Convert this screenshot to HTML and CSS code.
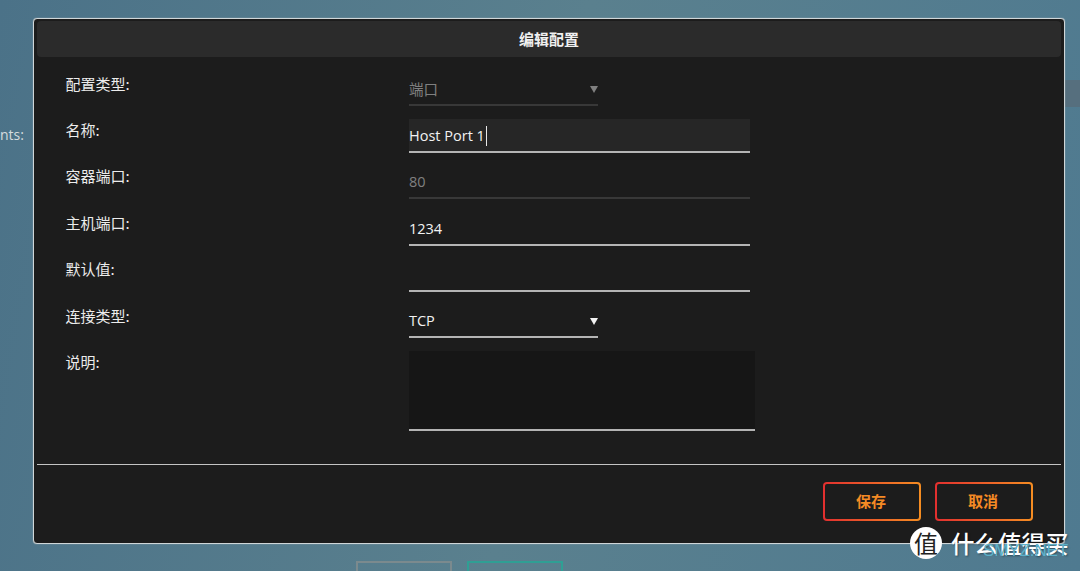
FILE: index.html
```html
<!DOCTYPE html>
<html lang="zh-CN">
<head>
<meta charset="UTF-8">
<title>编辑配置</title>
<link rel="stylesheet" href="styles.css">
</head>
<body>
<div class="behind-label">nts:</div>
<div class="behind-bar"></div>
<div class="behind-btn grey"></div>
<div class="behind-btn teal"></div>

<div class="dialog">
    <div class="dialog-title">编辑配置</div>
    <div class="form">
        <div class="row row-select">
            <div class="label">配置类型:</div>
            <div class="field select disabled">端口<span class="arrow"></span></div>
        </div>
        <div class="row">
            <div class="label">名称:</div>
            <div class="field focused">Host Port 1<span class="caret"></span></div>
        </div>
        <div class="row">
            <div class="label">容器端口:</div>
            <div class="field disabled">80</div>
        </div>
        <div class="row">
            <div class="label">主机端口:</div>
            <div class="field">1234</div>
        </div>
        <div class="row">
            <div class="label">默认值:</div>
            <div class="field"></div>
        </div>
        <div class="row">
            <div class="label">连接类型:</div>
            <div class="field select">TCP<span class="arrow"></span></div>
        </div>
        <div class="row">
            <div class="label">说明:</div>
            <div class="field textarea"></div>
        </div>
    </div>
    <div class="dialog-footer">
        <button class="btn">保存</button>
        <button class="btn">取消</button>
    </div>
</div>

<div class="watermark">
    <span class="wm-logo">值</span>
    <span class="wm-text">什么值得买</span>
    <span class="wm-site">SMYZ.NET</span>
</div>
</body>
</html>
```

FILE: styles.css
```css
html, body {
    margin: 0;
    padding: 0;
    height: 100%;
}
body {
    position: relative;
    width: 1080px;
    height: 571px;
    overflow: hidden;
    font-family: "Noto Sans CJK SC", sans-serif;
    background: linear-gradient(100deg, #4b7288 0%, #5a808e 50%, #4f7a90 100%);
}
.behind-label {
    position: absolute;
    left: 0;
    top: 125px;
    color: #d5dcdf;
    font-family: "Open Sans", sans-serif;
    font-size: 14px;
    line-height: 20px;
}
.behind-bar {
    position: absolute;
    left: 1065px;
    top: 80px;
    width: 15px;
    height: 27px;
    background-color: #566f7e;
}
.behind-btn {
    position: absolute;
    top: 561px;
    width: 92px;
    height: 30px;
    border: 2px solid #7b8a8e;
}
.behind-btn.grey {
    left: 356px;
}
.behind-btn.teal {
    left: 467px;
    border-color: #2f9f94;
}

.dialog {
    position: absolute;
    left: 33px;
    top: 18px;
    width: 1032px;
    height: 526px;
    box-sizing: border-box;
    border: 1px solid #cfd6d8;
    border-radius: 4px;
    box-shadow: 0 0 1px #cfd6d8;
    background-color: #1c1c1c;
    padding: 2px 3px;
    display: flex;
    flex-direction: column;
}
.dialog-title {
    height: 36px;
    flex-shrink: 0;
    background-color: #2b2b2b;
    border-radius: 4px;
    color: #f0f0f0;
    font-size: 15px;
    font-weight: 700;
    line-height: 36px;
    text-align: center;
}
.form {
    display: flex;
    flex-direction: column;
    gap: 13.5px;
    padding: 16px 0 0 28.5px;
    height: 408px;
    flex-shrink: 0;
    box-sizing: border-box;
    border-bottom: 1px solid #c4c4c4;
}
.row {
    display: grid;
    grid-template-columns: 343.5px 1fr;
    height: 33px;
}
.row-select {
    height: 32px;
}
.label {
    color: #ececec;
    font-size: 15px;
    line-height: 22px;
}
.field {
    position: relative;
    width: 341px;
    height: 34px;
    padding-top: 2px;
    box-sizing: border-box;
    border-bottom: 2px solid #b4b4b4;
    color: #f2f2f2;
    font-family: "Open Sans", "Noto Sans CJK SC", sans-serif;
    font-size: 14.5px;
    line-height: 30px;
    display: flex;
    align-items: center;
}
.field.focused {
    background-color: #262626;
}
.field.disabled {
    color: #808080;
    border-bottom-color: #383838;
}
.field.select {
    width: 189px;
    height: 33px;
}
.field.textarea {
    width: 346px;
    height: 80px;
    background-color: #161616;
}
.arrow {
    position: absolute;
    right: 0;
    top: 13px;
    width: 0;
    height: 0;
    border-left: 4px solid transparent;
    border-right: 4px solid transparent;
    border-top: 7px solid currentColor;
}
.caret {
    display: inline-block;
    width: 1px;
    height: 20px;
    margin-left: 1px;
    background-color: #e8e8e8;
}

.dialog-footer {
    display: flex;
    justify-content: flex-end;
    gap: 14px;
    padding: 17px 28px 0 0;
}
.btn {
    width: 98px;
    height: 39px;
    padding: 0 2px 2px 0;
    border: 2px solid transparent;
    border-radius: 4px;
    background: linear-gradient(#1c1c1c, #1c1c1c) padding-box,
                linear-gradient(90deg, #e22f2f, #f58d22) border-box;
    color: #f58a24;
    font-family: "Noto Sans CJK SC", sans-serif;
    font-size: 15px;
    font-weight: 700;
}

.watermark {
    position: absolute;
    left: 910px;
    top: 526px;
    display: flex;
    align-items: center;
    gap: 9px;
    color: #fff;
}
.wm-logo {
    width: 32px;
    height: 32px;
    border-radius: 50%;
    background-color: #fff;
    color: #222;
    font-size: 24px;
    line-height: 32px;
    text-align: center;
}
.wm-text {
    font-size: 23.5px;
    font-weight: 500;
    line-height: 34px;
    white-space: nowrap;
    text-shadow: 1px 1px 2px rgba(0, 0, 0, 0.4);
}
.wm-site {
    position: absolute;
    left: 73px;
    top: 15px;
    color: #5cb0c8;
    font-family: "Liberation Sans", sans-serif;
    font-size: 17px;
    letter-spacing: -0.1px;
    line-height: 20px;
}
```
